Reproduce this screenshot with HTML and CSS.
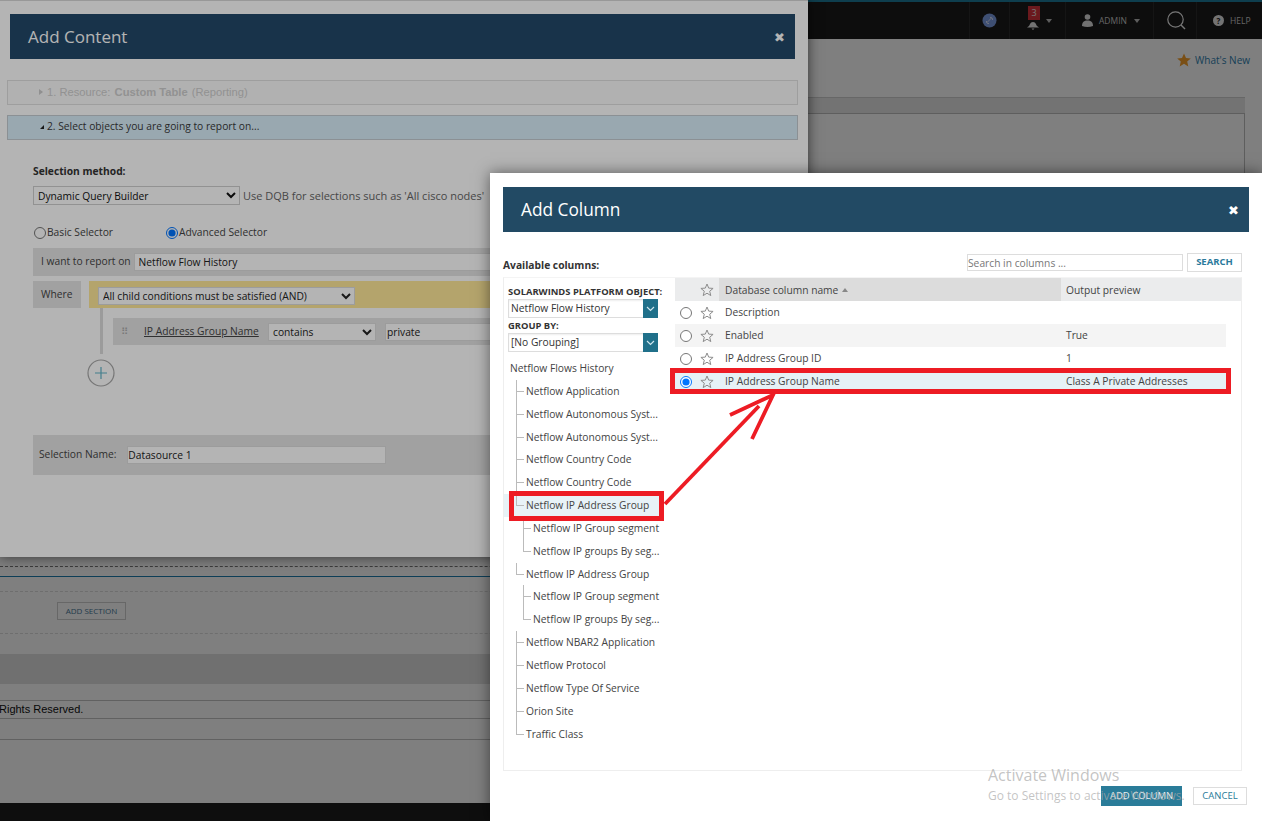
FILE: index.html
```html
<!DOCTYPE html>
<html lang="en">
<head>
<meta charset="utf-8">
<title>Add Column</title>
<link rel="stylesheet" href="styles.css">
</head>
<body>
<svg class="defs" width="0" height="0" aria-hidden="true">
  <symbol id="star" viewBox="0 0 14 14"><polygon points="7,1 8.7,5.1 13.1,5.4 9.7,8.2 10.8,12.6 7,10.2 3.2,12.6 4.3,8.2 0.9,5.4 5.3,5.1" fill="none" stroke="#8d8d8d" stroke-width="1"/></symbol>
</svg>
<div class="canvas">
  <div class="backdrop">
    <header class="topbar">
      <div class="cell c-link"><svg width="15" height="15" viewBox="0 0 15 15"><circle cx="7.5" cy="7.5" r="7" fill="#7f9fe8"/><path d="M5 9.5l4.500-4.500M4.500 8a2 2 0 0 0 2.500 2.500M8 4.500a2 2 0 0 1 2.500 2.500" stroke="#dfe8ff" fill="none" stroke-width="1"/></svg></div>
      <div class="cell c-bell">
        <span class="badge">3</span>
        <svg class="bell" width="12" height="10" viewBox="0 0 12 10"><path d="M2 6c1-1 1-4 4-4s3 3 4 4l2 1.500H0zM4.500 8.500h3L6 10z" fill="#e8e8e8"/></svg>
        <span class="caret"></span>
      </div>
      <div class="cell c-user">
        <svg width="11" height="13" viewBox="0 0 11 13"><circle cx="5.500" cy="3" r="2.800" fill="#e4e4e4"/><path d="M0 12c0-3 1-5.500 5.500-5.500S11 9 11 12q-5.500 2-11 0z" fill="#e4e4e4"/></svg>
        <span class="toptext">ADMIN</span><span class="caret"></span>
      </div>
      <div class="cell c-search"><svg width="19" height="19" viewBox="0 0 19 19"><circle cx="8.500" cy="8.500" r="7.700" fill="none" stroke="#f0f0f0" stroke-width="1.200"/><path d="M14 14l4 4" stroke="#f0f0f0" stroke-width="1.400"/></svg></div>
      <div class="cell c-help"><span class="helpdot">?</span><span class="toptext">HELP</span></div>
    </header>
    <div class="whatsnew">
      <svg width="14" height="14" viewBox="0 0 14 14"><polygon points="7,0.500 9,5 13.800,5.400 10.200,8.500 11.300,13.400 7,10.800 2.700,13.400 3.800,8.500 0.200,5.400 5,5" fill="#f6a02c"/></svg>
      <a class="whatslink">What's New</a>
    </div>
    <section class="panel"><div class="panel-head"></div><div class="panel-body"></div></section>
    <div class="rule-dash"></div>
    <div class="rule-blue"></div>
    <div class="section-row"><button class="addsection">ADD SECTION</button></div>
    <div class="band"></div>
    <div class="copyright">Rights Reserved.</div>
    <div class="emptyline"></div>
    <footer class="blackfoot"></footer>
  </div>
  <div class="dim"></div>

  <div class="win-content">
    <div class="win-head"><h1>Add Content</h1><span class="close">✖</span></div>
    <div class="step step-off"><span class="tri-r"></span>1. Resource: <b>Custom Table</b> (Reporting)</div>
    <div class="step step-on"><span class="tri-d"></span>2. Select objects you are going to report on...</div>
    <div class="form">
      <label class="bold-label">Selection method:</label>
      <div class="method-row">
        <select class="sel-method"><option>Dynamic Query Builder</option></select>
        <span class="hint">Use DQB for selections such as 'All cisco nodes'</span>
      </div>
      <div class="radios">
        <label class="radio radio-a"><input type="radio" name="sel">Basic Selector</label>
        <label class="radio"><input type="radio" name="sel" checked>Advanced Selector</label>
      </div>
      <div class="report-row">I want to report on<input class="report-input" value="Netflow Flow History"></div>
      <div class="where-row">
        <div class="where-box">Where</div>
        <div class="where-bar"><select class="sel-and"><option>All child conditions must be satisfied (AND)</option></select></div>
      </div>
      <div class="cond-wrap">
        <div class="cond-row">
          <span class="grip">⠿</span>
          <a class="field">IP Address Group Name</a>
          <select class="sel-op"><option>contains</option></select>
          <input class="cond-input" value="private">
        </div>
      </div>
      <div class="plus"><svg width="28" height="28" viewBox="0 0 28 28"><circle cx="14" cy="14" r="13" fill="none" stroke="#a8a8a8" stroke-width="1.200"/><path d="M14 8v12M8 14h12" stroke="#5fb3c8" stroke-width="1.200"/></svg></div>
      <div class="name-row">Selection Name:<input class="name-input" value="Datasource 1"></div>
    </div>
  </div>
  <div class="dim dim-top"></div>

  <div class="win-column">
    <div class="win-head col-head"><h2>Add Column</h2><span class="close col-close">✖</span></div>
    <div class="toolbar">
      <b class="avail">Available columns:</b>
      <div class="search"><input class="search-input" placeholder="Search in columns ..."><button class="btn-search">SEARCH</button></div>
    </div>
    <div class="picker">
      <aside class="side">
        <div class="side-label">SOLARWINDS PLATFORM OBJECT:</div>
        <div class="combo"><span>Netflow Flow History</span><i class="combo-btn"><svg width="9" height="6" viewBox="0 0 9 6"><path d="M1 1l3.500 3.500L8 1" fill="none" stroke="#cfe6ee" stroke-width="1.200"/></svg></i></div>
        <div class="side-label group">GROUP BY:</div>
        <div class="combo"><span>[No Grouping]</span><i class="combo-btn"><svg width="9" height="6" viewBox="0 0 9 6"><path d="M1 1l3.500 3.500L8 1" fill="none" stroke="#cfe6ee" stroke-width="1.200"/></svg></i></div>
        <ul class="tree">
          <li class="root">Netflow Flows History</li>
          <li class="n1">Netflow Application</li>
          <li class="n1">Netflow Autonomous Syst...</li>
          <li class="n1">Netflow Autonomous Syst...</li>
          <li class="n1">Netflow Country Code</li>
          <li class="n1">Netflow Country Code</li>
          <li class="n1 end picked">Netflow IP Address Group</li>
          <li class="n2">Netflow IP Group segment</li>
          <li class="n2 end">Netflow IP groups By seg...</li>
          <li class="n1 end">Netflow IP Address Group</li>
          <li class="n2">Netflow IP Group segment</li>
          <li class="n2 end">Netflow IP groups By seg...</li>
          <li class="n1">Netflow NBAR2 Application</li>
          <li class="n1">Netflow Protocol</li>
          <li class="n1">Netflow Type Of Service</li>
          <li class="n1">Orion Site</li>
          <li class="n1 end">Traffic Class</li>
        </ul>
      </aside>
      <div class="grid">
        <div class="grid-head">
          <span></span>
          <span class="star-c"><svg class="star" width="14" height="14"><use href="#star"/></svg></span>
          <span class="th th-sort">Database column name <i class="sort"></i></span>
          <span class="th">Output preview</span>
        </div>
        <div class="row"><span class="rad"><input type="radio" name="col"></span><span class="star-c"><svg class="star" width="14" height="14"><use href="#star"/></svg></span><span class="td">Description</span><span class="td"></span></div>
        <div class="row alt"><span class="rad"><input type="radio" name="col"></span><span class="star-c"><svg class="star" width="14" height="14"><use href="#star"/></svg></span><span class="td">Enabled</span><span class="td">True</span></div>
        <div class="row"><span class="rad"><input type="radio" name="col"></span><span class="star-c"><svg class="star" width="14" height="14"><use href="#star"/></svg></span><span class="td">IP Address Group ID</span><span class="td">1</span></div>
        <div class="row sel"><span class="rad"><input type="radio" name="col" checked></span><span class="star-c"><svg class="star" width="14" height="14"><use href="#star"/></svg></span><span class="td">IP Address Group Name</span><span class="td">Class A Private Addresses</span></div>
      </div>
    </div>
    <div class="actions">
      <button class="btn-add">ADD COLUMN</button>
      <button class="btn-cancel">CANCEL</button>
    </div>
  </div>

  <div class="mark mark-row"></div>
  <div class="mark mark-tree"></div>
  <svg class="arrow" width="130" height="120" viewBox="0 0 130 120"><path d="M2 112L96 14" stroke="#ed1c24" stroke-width="3.800" fill="none"/><path d="M67 23L110 3L89 47" stroke="#ed1c24" stroke-width="3.800" fill="none" stroke-linejoin="miter"/></svg>
  <div class="activate"><div class="act-1">Activate Windows</div><div class="act-2">Go to Settings to activate Windows.</div></div>
</div>
</body>
</html>
```
FILE: styles.css
```css
* { box-sizing: border-box; }
html, body { margin: 0; padding: 0; height: 100%; overflow: hidden; }
body { font: 10.25px/1.3 "Open Sans", sans-serif; color: #333; background: #fff; }
.defs { position: absolute; }
.canvas { position: relative; width: 1262px; height: 821px; overflow: hidden; }
input, select, button { font: inherit; margin: 0; }
ul { list-style: none; margin: 0; padding: 0; }

/* background page */
.backdrop { display: flex; flex-direction: column; height: 821px; background: #fff; }
.topbar { height: 39px; flex: none; display: flex; justify-content: flex-end; background: #1c1c1c; border-top: 2px solid #1f7f9d; }
.cell { display: flex; align-items: center; border-left: 1px solid #2c2c2c; height: 100%; }
.c-link { width: 40px; justify-content: center; }
.c-bell { width: 56px; position: relative; padding-left: 17px; }
.bell { margin-top: 9px; }
.badge { position: absolute; left: 18px; top: 4px; width: 12px; height: 14px; background: #d8343c; color: #eee; font-size: 9px; line-height: 14px; text-align: center; }
.caret { width: 0; height: 0; border: 3.500px solid transparent; border-top: 4px solid #bbb; border-bottom: 0; margin-left: 7px; }
.c-user { width: 88px; padding-left: 16px; }
.toptext { font-size: 8.500px; color: #ccc; margin-left: 6px; }
.c-search { width: 43px; padding-left: 13px; }
.c-help { width: 66px; padding-left: 16px; }
.helpdot { width: 11px; height: 11px; border-radius: 50%; background: #e8e8e8; color: #222; font-size: 8px; line-height: 11px; text-align: center; font-weight: 700; }
.whatsnew { height: 58px; flex: none; display: flex; justify-content: flex-end; align-items: flex-start; gap: 4px; padding: 14px 12px 0 0; }
.whatslink { font-size: 10px; color: #2f7fb0; line-height: 14px; }
.panel { height: 460px; flex: none; margin-right: 17px; display: flex; flex-direction: column; }
.panel-head { height: 16px; background: #e8e8e8; border-top: 1px solid #cfcfcf; }
.panel-body { flex: 1; border: 1px solid #bdbdbd; border-bottom: 0; }
.rule-dash { height: 1px; margin-top: 9px; border-top: 1px dashed #777; flex: none; }
.rule-blue { height: 1px; margin-top: 9px; background: #1b7fb0; flex: none; }
.section-row { height: 43px; margin-top: 14px; flex: none; border-top: 1px dashed #ddd; border-bottom: 1px dashed #ddd; padding: 10px 0 0 57px; }
.addsection { display: block; width: 69px; height: 18px; padding: 0; background: transparent; border: 1px solid #cfcfcf; color: #4a7a9a; font-size: 8px; line-height: 16px; }
.band { height: 30px; margin-top: 20px; background: #e2e2e2; flex: none; }
.copyright { margin-top: 16px; height: 19px; flex: none; border-top: 1px solid #c4c4c4; border-bottom: 1px solid #c4c4c4; font: 11px/17px "Liberation Sans", sans-serif; color: #111; text-indent: -1px; }
.emptyline { height: 21px; flex: none; border-bottom: 1px solid #c4c4c4; }
.blackfoot { flex: 1; background: #1e1e1e; margin-top: 63px; }
.dim { position: absolute; inset: 0; background: rgba(0, 0, 0, .295); }

/* Add Content window */
.win-content { position: absolute; left: 0; top: 0; width: 808px; height: 557px; background: #fff; border-top: 1px solid #d8d8d8; box-shadow: 0 0 12px rgba(0, 0, 0, .6); }
.win-head { display: flex; justify-content: space-between; align-items: center; background: #22496a; color: #fff; }
.win-content .win-head { height: 45px; margin: 13px 13px 0 10px; padding: 2px 10px 0 18px; }
.win-head h1, .win-head h2 { margin: 0; font-size: 17px; font-weight: 400; }
.close { font-size: 13px; line-height: 1; color: #fff; }
.step { margin: 0 10px 0 7px; height: 25px; border: 1px solid #e0e0e0; display: flex; align-items: center; }
.step-off { margin-top: 21px; font: 11.200px "Liberation Sans", sans-serif; color: #cfcfcf; background: #fbfbfb; padding: 0 0 2px 31px; white-space: pre; }
.step-off b { margin: 0 1px 0 1px; }
.step-on { margin-top: 10px; background: #d9eefa; border-color: #c5cdd2; color: #3a3a3a; padding: 0 0 2px 32px; }
.tri-r { border: 3px solid transparent; border-left: 4px solid #ccc; border-right: 0; margin-right: 4px; }
.tri-d { border-bottom: 4px solid #222; border-left: 4px solid transparent; margin-right: 3px; }
.form { padding: 24px 0 0 33px; }
.bold-label { display: block; font-weight: 700; height: 14px; line-height: 14px; color: #333; }
.method-row { display: flex; align-items: center; margin-top: 8px; height: 19px; gap: 3px; white-space: nowrap; }
.sel-method { width: 207px; height: 19px; padding: 0; background: #fff; border: 1px solid #cfcfcf; color: #111; }
.hint { color: #666; font-size: 11px; margin-top: 2px; }
.radios { display: flex; margin-top: 19px; height: 18px; align-items: center; }
.radio { display: flex; align-items: center; color: #444; }
.radio input { width: 12px; height: 12px; margin: 0 1px 0 1px; }
.radio-a { width: 132px; }
.report-row { display: flex; align-items: center; height: 28px; margin-top: 6px; background: #e4e4e4; padding-left: 8px; width: 760px; color: #444; gap: 3px; }
.report-input { flex: 1; height: 18px; padding: 0 4px; border: 1px solid #ddd; background: #fff; color: #222; }
.where-row { display: flex; gap: 8px; margin-top: 5px; height: 27px; }
.where-box { width: 48px; background: #e4e4e4; padding: 0 8px; color: #444; display: flex; align-items: center; }
.where-bar { flex: 1; background: #ffe89a; padding: 6px 0 0 9px; }
.sel-and { display: block; width: 257px; height: 18px; padding: 0; background: #fff; border: 1px solid #ddd; color: #222; }
.cond-wrap { margin-left: 67px; padding: 10px 0 9px 10px; border-left: 3px solid #dcdcdc; height: 46px; }
.cond-row { display: flex; align-items: center; height: 27px; width: 700px; background: #e4e4e4; }
.grip { width: 31px; padding-left: 8px; color: #aaa; font-size: 10px; }
.field { color: #444; text-decoration: underline; width: 124px; white-space: nowrap; }
.sel-op { width: 108px; height: 18px; padding: 0; border: 1px solid #ddd; background: #fff; color: #222; }
.cond-input { margin-left: 9px; width: 200px; height: 18px; padding: 0 1px; border: 1px solid #ddd; background: #fff; color: #222; }
.plus { margin: 5px 0 0 54px; height: 28px; }
.plus svg { display: block; }
.name-row { display: flex; align-items: center; height: 40px; margin-top: 48px; background: #e4e4e4; padding-left: 6px; color: #444; width: 760px; }
.name-input { margin-left: 11px; width: 259px; height: 18px; padding: 0; border: 1px solid #ddd; background: #fff; color: #222; }

/* Add Column window */
.win-column { position: absolute; left: 490px; top: 173px; width: 772px; height: 648px; background: #fff; box-shadow: 0 0 14px rgba(0, 0, 0, .5); padding: 14px 13px 0; }
.col-head { height: 45px; padding: 2px 10px 0 18px; background: #224a64; }
.col-head h2 { font-size: 17.300px; }
.toolbar { display: flex; justify-content: space-between; align-items: flex-end; height: 40px; padding-right: 7px; }
.avail { color: #333; line-height: 14px; }
.search { display: flex; gap: 4px; align-items: center; }
.search-input { width: 216px; height: 17px; padding: 0; border: 1px solid #ddd; }
.search-input::placeholder { color: #777; opacity: 1; }
.btn-search { width: 55px; height: 19px; padding: 0; background: #fff; border: 1px solid #ddd; color: #2a7a9c; font-weight: 700; font-size: 9.500px; }
.picker { display: flex; width: 739px; height: 494px; margin-top: 5px; border: 1px solid #eee; border-top-color: #f4f4f4; }
.side { width: 171px; flex: none; padding: 7px 0 0 4px; }
.side-label { font-weight: 700; font-size: 9.400px; line-height: 13px; height: 13px; color: #333; white-space: nowrap; }
.side-label.group { margin-top: 1px; }
.combo { display: flex; justify-content: space-between; width: 150px; height: 19px; margin-top: 1px; border: 1px solid #ddd; background: #fff; align-items: center; padding: 1px 0 0 2px; color: #333; box-shadow: inset 0 1px 2px #eee; }
.combo-btn { width: 15px; height: 19px; margin: -1px -1px 0 0; background: #20708a; display: flex; align-items: center; justify-content: center; }
.tree { margin: 5px 0 0 -4px; }
.tree li { position: relative; height: 22.850px; line-height: 22.850px; color: #444; white-space: nowrap; }
.tree .root { padding-left: 6px; }
.tree .n1 { padding-left: 22px; }
.tree .n2 { padding-left: 29px; }
.tree .n1::before, .tree .n2::before { content: ""; position: absolute; top: 0; bottom: 0; width: 8px; border-left: 1px solid #bbb; }
.tree .n1::after, .tree .n2::after { content: ""; position: absolute; top: 11px; width: 8px; border-top: 1px solid #bbb; }
.tree .n1::before, .tree .n1::after { left: 12px; }
.tree .n2::before, .tree .n2::after { left: 19px; }
.tree .end::before { bottom: 11px; }
.tree .picked { background: #e8f2f7; margin-right: 11px; }
.grid { flex: 1; min-width: 0; }
.grid-head { display: grid; grid-template-columns: 21px 23px 342px 1fr; height: 23px; background: #ebeced; align-items: center; }
.th { height: 23px; line-height: 24px; padding-left: 5px; color: #444; }
.th-sort { background: #dcdcdc; padding-left: 6px; }
.sort { display: inline-block; border: 3px solid transparent; border-bottom: 4px solid #888; border-top: 0; margin: 0 0 2px 1px; }
.star-c { display: flex; justify-content: flex-start; align-items: center; padding-left: 3.500px; }
.star { display: block; }
.row { display: grid; grid-template-columns: 21px 23px 342px 1fr; height: 23px; width: 551px; align-items: center; color: #444; }
.alt { background: #f4f4f4; }
.sel { background: #e6f1f6; }
.rad { display: flex; justify-content: center; }
.rad input { width: 12px; height: 12px; margin: 0; }
.td { padding-left: 6px; white-space: nowrap; }
.td:last-child { padding-left: 5px; }
.actions { display: flex; justify-content: flex-end; align-items: center; gap: 11px; margin: 15px 2px 0 0; }
.btn-add { width: 81px; height: 20px; padding: 0; border: 0; background: #2a7c99; color: #e8f2f5; font-size: 9.500px; }
.btn-cancel { width: 54px; height: 18px; padding: 0; background: #fff; border: 1px solid #ddd; color: #2a7c99; font-size: 9.500px; }

/* annotations */
.mark { position: absolute; border: 5px solid #ed1c24; }
.mark-row { left: 670px; top: 368px; width: 561px; height: 26px; }
.mark-tree { left: 509px; top: 491px; width: 155px; height: 30px; }
.arrow { position: absolute; left: 663px; top: 392px; }
.activate { position: absolute; left: 988px; top: 764px; color: rgba(170, 170, 170, .7); pointer-events: none; white-space: nowrap; }
.act-1 { font-size: 16px; line-height: 22px; }
.act-2 { font-size: 12px; line-height: 18px; margin-top: 1px; }
```
